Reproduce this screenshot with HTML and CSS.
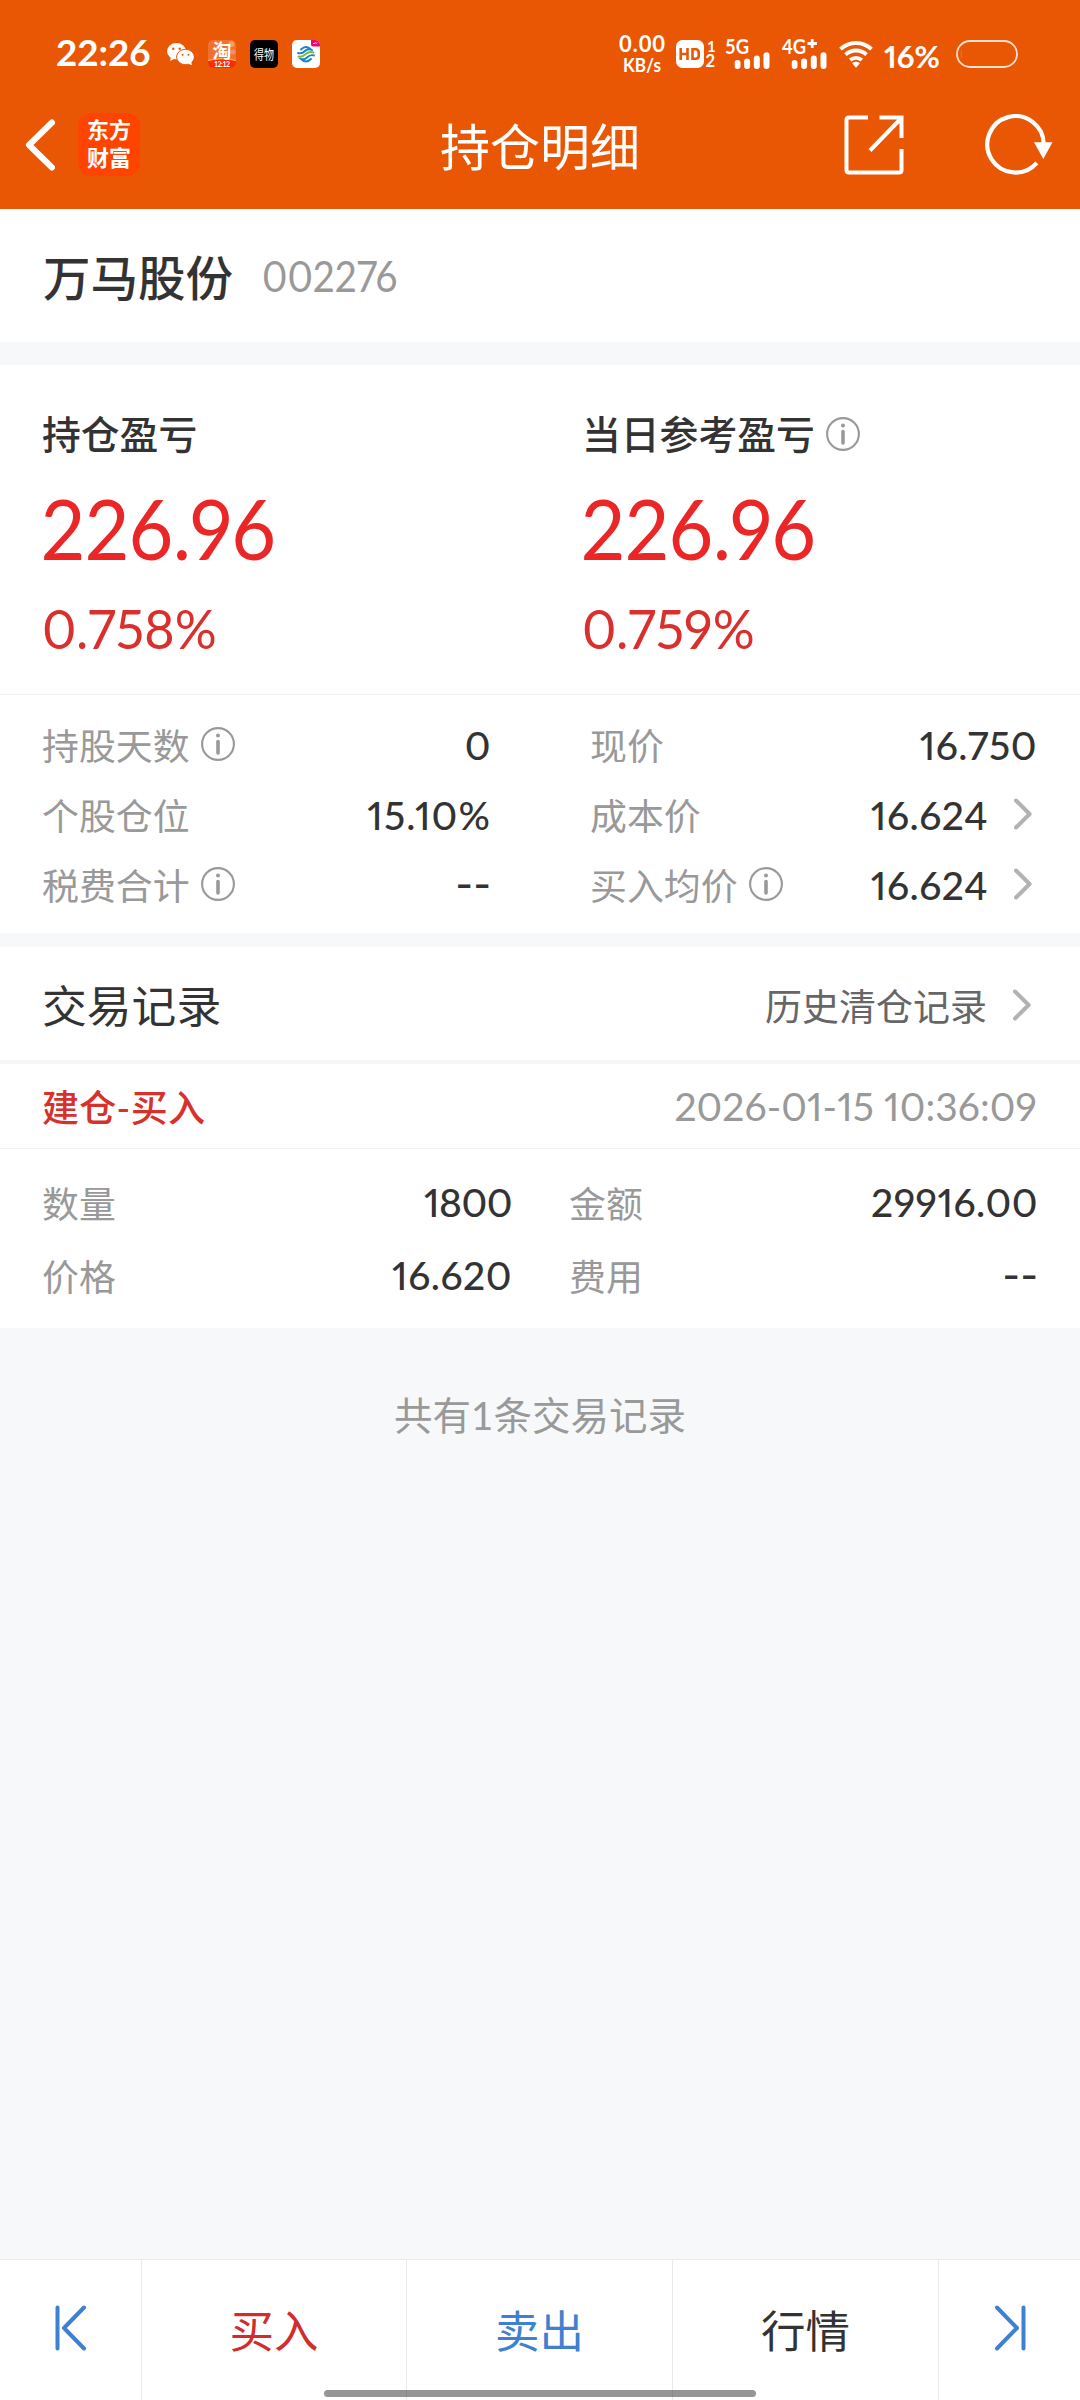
FILE: index.html
```html
<!DOCTYPE html>
<html lang="zh-CN">
<head>
<meta charset="utf-8">
<title>持仓明细</title>
<link rel="stylesheet" href="styles.css">
</head>
<body>
<svg class="defs" width="0" height="0">
  <symbol id="info" viewBox="0 0 34 34"><circle cx="17" cy="17" r="15.9" fill="none" stroke="#999" stroke-width="2.1"/><circle cx="17" cy="8.6" r="2" fill="#999"/><path d="M17 14.5V26" stroke="#999" stroke-width="3.6" stroke-linecap="round"/></symbol>
  <symbol id="chev" viewBox="0 0 18 32"><path d="M2 2.5 15.6 16 2 29.5" fill="none" stroke="#b2b2b2" stroke-width="4" stroke-linecap="round" stroke-linejoin="round"/></symbol>
  <symbol id="bars" viewBox="0 0 36 17"><path d="M3 11v3M12.6 9.5V14M22.3 6.5V14M32 3.2V14" stroke="#fff" stroke-width="6" stroke-linecap="round"/></symbol>
</svg>
<header class="top">
  <div class="status">
    <span class="time n">22:26</span>
    <svg class="wechat" viewBox="0 0 27 22"><ellipse cx="9.5" cy="8.2" rx="9.5" ry="8.2" fill="#fff"/><path d="M4 13 3.2 18 8 15.5Z" fill="#fff"/><ellipse cx="18.5" cy="14" rx="8.9" ry="7.7" fill="#fff" stroke="#e95604" stroke-width="1"/><path d="M21 20.6 25 22.4 24 18Z" fill="#fff"/><g fill="#e95604"><circle cx="6.3" cy="5.8" r="1.2"/><circle cx="12.7" cy="5.8" r="1.2"/><circle cx="15.6" cy="11.8" r="1"/><circle cx="21.4" cy="11.8" r="1"/></g></svg>
    <svg class="app" viewBox="0 0 28 28"><rect width="28" height="28" rx="5" fill="#f0702f"/><circle cx="23.5" cy="4" r="3" fill="#f7a35c"/><circle cx="25" cy="12" r="2.500" fill="#f58a7a"/><path d="M0 20.500Q14 17.500 28 20.500V23a5 5 0 0 1-5 5H5a5 5 0 0 1-5-5Z" fill="#fb2b06"/><path d="M0 20.500Q14 17 28 20.500" fill="none" stroke="#f6c648" stroke-width="1.200"/><g fill="#fff" font-weight="700" text-anchor="middle"><text x="14" y="18" font-size="19">淘</text><text x="14" y="27" font-size="7" textLength="16">12:12</text></g></svg>
    <svg class="app" viewBox="0 0 28 28"><rect width="28" height="28" rx="5" fill="#000"/><text x="4" y="19" font-size="13" fill="#fff" textLength="20" lengthAdjust="spacingAndGlyphs">得物</text></svg>
    <svg class="app" viewBox="0 0 28 28"><rect width="28" height="28" rx="5" fill="#fff"/><path d="M19 0h4a5 5 0 0 1 5 5v1.500h-7a2 2 0 0 1-2-2z" fill="#e5096f"/><path d="M21 3.500h1.500l.8-1 .8 1 1-1" stroke="#fff" fill="none" stroke-width=".8"/><g fill="none" stroke-width="1.900" stroke-linecap="round"><path d="M9 9.500q5-5 10 0M6 13c3 1 5 0 7-2s4-2.500 7-1M9 19q5 5 10 0M22 15.500c-3-1-5 0-7 2s-4 2.500-7 1" stroke="#1a84c4"/><path d="M6.500 16.500c3 .8 5-.6 7-2.300s4.500-3 8-1.700" stroke="#7aba3a"/></g></svg>
    <svg class="speed" viewBox="0 0 46 40"><text x="0" y="15.800" font-size="22" textLength="46">0.00</text><text x="4" y="35.500" font-size="18.500" textLength="38" lengthAdjust="spacingAndGlyphs">KB/s</text></svg>
    <svg class="hd" viewBox="0 0 40 28"><rect width="28" height="28" rx="6.500" fill="#fff"/><g fill="none" stroke="#e95604" stroke-width="2.600"><path d="M4.700 8v12M11.500 8v12M4.700 14h6.800M16.500 9.300v9.400h3.200q3 0 3-3v-3.400q0-3-3-3z"/></g><text x="31" y="11.500" font-size="15">1</text><text x="29.500" y="27" font-size="16.500" textLength="10">2</text></svg>
    <svg class="net" viewBox="0 0 46 32"><text x="0" y="16" font-size="21.500" textLength="24" lengthAdjust="spacingAndGlyphs">5G</text><use href="#bars" x="9.500" y="14" width="36" height="17"/></svg>
    <svg class="net" viewBox="0 0 46 32"><text x="0" y="16" font-size="21.500" textLength="24" lengthAdjust="spacingAndGlyphs">4G</text><path d="M25.500 5.500h9.500M30.200 1v9" stroke="#fff" stroke-width="2.800"/><use href="#bars" x="9.500" y="14" width="36" height="17"/></svg>
    <svg class="wifi" viewBox="0 0 34 28"><g fill="none" stroke="#fff" stroke-width="3.800"><path d="M1.500 9.200a22.500 22.500 0 0 1 31 0"/><path d="M6.500 14.600a15.500 15.500 0 0 1 21 0"/><path d="M11.200 20a9 9 0 0 1 11.600 0"/></g><path d="M13 23.200q4-2.800 8 0L17 27.800Z" fill="#fff"/></svg>
    <span class="pct n">16%</span>
    <svg class="batt" viewBox="0 0 62 28"><rect x="1" y="1" width="60" height="26" rx="13" fill="none" stroke="#ffe1cc" stroke-width="1.800"/><path d="M5.800 8.500q-2 5.500 0 11z" fill="#b08a7c"/></svg>
  </div>
  <div class="nav">
    <svg class="back" viewBox="0 0 30 52"><path d="M27 3.500 4 26 27 48.500" fill="none" stroke="#fff" stroke-width="6" stroke-linecap="round" stroke-linejoin="round"/></svg>
    <span class="logo">东方<br>财富</span>
    <h1>持仓明细</h1>
    <svg class="share" viewBox="0 0 60 60"><path d="M24 2.500H5Q2.500 2.500 2.500 5V55Q2.500 57.500 5 57.500H55Q57.500 57.500 57.500 55V34M35.500 2.500H57.500V23M26 35.500 57 3.500" fill="none" stroke="#fff" stroke-width="4"/></svg>
    <svg class="refresh" viewBox="0 0 68 62"><path d="M58.700 31A28.200 28.200 0 1 0 51.800 48.800" fill="none" stroke="#fff" stroke-width="4.200"/><path d="M49 28.300H67.500L58.300 45Z" fill="#fff"/></svg>
  </div>
</header>
<main>
  <section class="stock"><h2>万马股份</h2><span class="code n">002276</span></section>
  <section class="pl">
    <div><div class="cap">持仓盈亏</div><div class="big"><span class="n">226.96</span></div><div class="rate"><span class="n">0.758%</span></div></div>
    <div><div class="cap">当日参考盈亏<svg class="info"><use href="#info"/></svg></div><div class="big"><span class="n">226.96</span></div><div class="rate"><span class="n">0.759%</span></div></div>
  </section>
  <section class="facts">
    <dl>
      <div><dt>持股天数<svg class="info"><use href="#info"/></svg></dt><dd class="n">0</dd></div>
      <div><dt>个股仓位</dt><dd class="n percent">15.10%</dd></div>
      <div><dt>税费合计<svg class="info"><use href="#info"/></svg></dt><dd class="dash">--</dd></div>
    </dl>
    <dl>
      <div><dt>现价</dt><dd class="n">16.750</dd></div>
      <div><dt>成本价</dt><dd class="n">16.624</dd><svg class="chev"><use href="#chev"/></svg></div>
      <div><dt>买入均价<svg class="info"><use href="#info"/></svg></dt><dd class="n">16.624</dd><svg class="chev"><use href="#chev"/></svg></div>
    </dl>
  </section>
  <section class="records">
    <div class="rec-head"><h3>交易记录</h3><a>历史清仓记录</a><svg class="chev"><use href="#chev"/></svg></div>
    <div class="rec-sub"><strong>建仓-买入</strong><time class="n">2026-01-15 10:36:09</time></div>
    <div class="rec-body">
      <dl>
        <div><dt>数量</dt><dd class="n whole">1800</dd></div>
        <div><dt>价格</dt><dd class="n">16.620</dd></div>
      </dl>
      <dl>
        <div><dt>金额</dt><dd class="n">29916.00</dd></div>
        <div><dt>费用</dt><dd class="dash">--</dd></div>
      </dl>
    </div>
  </section>
  <p class="total">共有1条交易记录</p>
</main>
<footer class="tabs">
  <a class="edge"><svg viewBox="0 0 32 46"><path d="M2.500 2.500V43.500M29 2.500 9 23 29 43.500" /></svg></a>
  <a class="buy">买入</a><a class="sell">卖出</a><a class="quote">行情</a>
  <a class="edge"><svg viewBox="0 0 32 46"><path d="M29.500 2.500V43.500M3 2.500 23 23 3 43.500" /></svg></a>
</footer>
<div class="home"></div>
</body>
</html>
```
FILE: styles.css
```css
* { box-sizing: border-box; margin: 0; padding: 0; }
body { width: 1080px; height: 2400px; display: flex; flex-direction: column; background: #f6f8fa; color: #333; font-family: Lato, "Noto Sans CJK SC", sans-serif; overflow: hidden; position: relative; }
.defs { position: absolute; }
svg { display: block; flex: none; }
h1, h2, h3 { font-weight: 400; }
.n { font-feature-settings: "pnum"; white-space: nowrap; }

.top { height: 209px; background: #e95604; color: #fff; flex: none; }
.status { height: 82px; padding: 26px 0 0 56px; display: flex; align-items: center; }
.time { width: 111px; font-size: 37px; font-weight: 700; line-height: 54px; padding-bottom: 4px; }
.wechat { width: 27px; height: 22px; margin-right: 14px; }
.app { width: 28px; height: 28px; margin-right: 14px; overflow: visible; }
.speed, .net, .hd { overflow: visible; }
.speed text, .net text, .hd text { font-family: Lato, sans-serif; font-weight: 700; fill: #fff; }
.speed { width: 46px; height: 40px; margin: 3px 11px 0 285px; }
.hd { width: 40px; height: 28px; margin-right: 9px; }
.net { width: 46px; height: 32px; margin-right: 11px; }
.wifi { width: 34px; height: 28px; margin-right: 11px; }
.pct { width: 72px; font-size: 31px; font-weight: 700; padding-top: 3px; }
.batt { width: 62px; height: 28px; }
.nav { height: 127px; padding: 0 27px 2px 25px; display: flex; align-items: center; }
.back { width: 30px; height: 52px; margin-right: 23px; }
.logo { width: 62px; height: 63px; border-radius: 13px; background: #ff4400; font-size: 22px; line-height: 28px; padding-top: 3px; font-weight: 700; text-align: center; }
h1 { font-size: 50px; line-height: 70px; margin-left: 300px; width: 404px; padding-top: 4px; }
.share { width: 60px; height: 60px; margin-right: 81px; }
.refresh { width: 68px; height: 62px; }

.stock { height: 133px; padding: 0 43px; background: #fff; display: flex; align-items: center; }
h2 { font-size: 47.500px; font-weight: 500; }
.code { font-size: 42px; color: #999; margin-left: 29px; transform: scaleX(.92); transform-origin: left; }
.pl { margin-top: 23px; height: 330px; background: #fff; border-bottom: 1px solid #f2f2f2; padding: 42px 0 0 42px; display: grid; grid-template-columns: 540px 1fr; }
.cap { font-size: 38.800px; line-height: 54px; height: 54px; font-weight: 500; display: flex; align-items: center; }
.info { width: 34px; height: 34px; margin: -1px 0 0 11px; }
.big { font-size: 83px; line-height: 100px; margin-top: 17px; color: #ea2626; }
.rate { font-size: 54px; line-height: 70px; margin-top: 16px; color: #d9302e; }
.big .n, .rate .n { display: inline-block; transform: translateX(-1px) scaleX(.935); transform-origin: left; }
.rate .n { transform: scaleX(.97); }
.facts { height: 238px; background: #fff; padding: 14px 43px 0 42px; display: grid; grid-template-columns: 449px 446px; gap: 100px; font-size: 36.900px; }
.facts dl > div { height: 70px; display: flex; align-items: center; }
.facts dl + dl { margin-left: -1px; }
dt { color: #999; display: flex; align-items: center; }
dd { margin-left: auto; font-size: 39px; font-weight: 500; letter-spacing: .5px; padding-top: 1px; }
.percent { letter-spacing: 1.100px; }
.whole { letter-spacing: -.5px; }
.dash { letter-spacing: 0; font-weight: 600; padding-bottom: 3px; transform: scaleX(1.230); transform-origin: right; }
.chev { width: 18px; height: 32px; margin-left: 26px; margin-right: 5px; }

.records { margin-top: 14px; background: #fff; height: 381px; }
.rec-head { height: 117px; border-bottom: 4px solid #f6f6f6; padding: 2px 44px 0 42px; display: flex; align-items: center; }
h3 { font-size: 44.800px; padding-bottom: 2px; }
.rec-head a { margin-left: auto; font-size: 37px; color: #666; padding-top: 1px; }
.rec-sub { height: 85px; border-bottom: 1px solid #f2f2f2; padding: 0 43px 0 42px; display: flex; align-items: center; justify-content: space-between; font-size: 37px; }
.rec-sub strong { font-weight: 500; color: #d8302c; letter-spacing: .3px; }
.rec-sub time { color: #999; font-size: 39px; letter-spacing: .1px; }
.rec-body { padding: 16px 42px 0 42px; display: grid; grid-template-columns: 470px 469px; gap: 57px; font-size: 36.900px; }
.rec-body dl > div { height: 73px; display: flex; align-items: center; }
.total { text-align: center; margin-top: 58px; font-size: 38.500px; line-height: 58px; color: #999; }

main { flex: 1; }
.tabs { height: 141px; flex: none; border-top: 1px solid #e8eaee; background: #fff; display: grid; grid-template-columns: 142px 265px 266px 266px 141px; font-size: 44.500px; text-align: center; line-height: 142px; }
.tabs a { border-right: 1px solid #e9eaec; }
.tabs a:last-child { border: 0; }
.edge { display: flex; justify-content: center; padding-top: 45px; }
.edge svg { width: 32px; height: 46px; }
.edge path { fill: none; stroke: #3f80d0; stroke-width: 4; stroke-linecap: round; stroke-linejoin: round; }
.buy { color: #d02d2b; }
.sell { color: #3f80d0; }
.home { position: absolute; left: 324px; top: 2390px; width: 432px; height: 7px; border-radius: 4px; background: rgba(60,60,60,.54); }
```
